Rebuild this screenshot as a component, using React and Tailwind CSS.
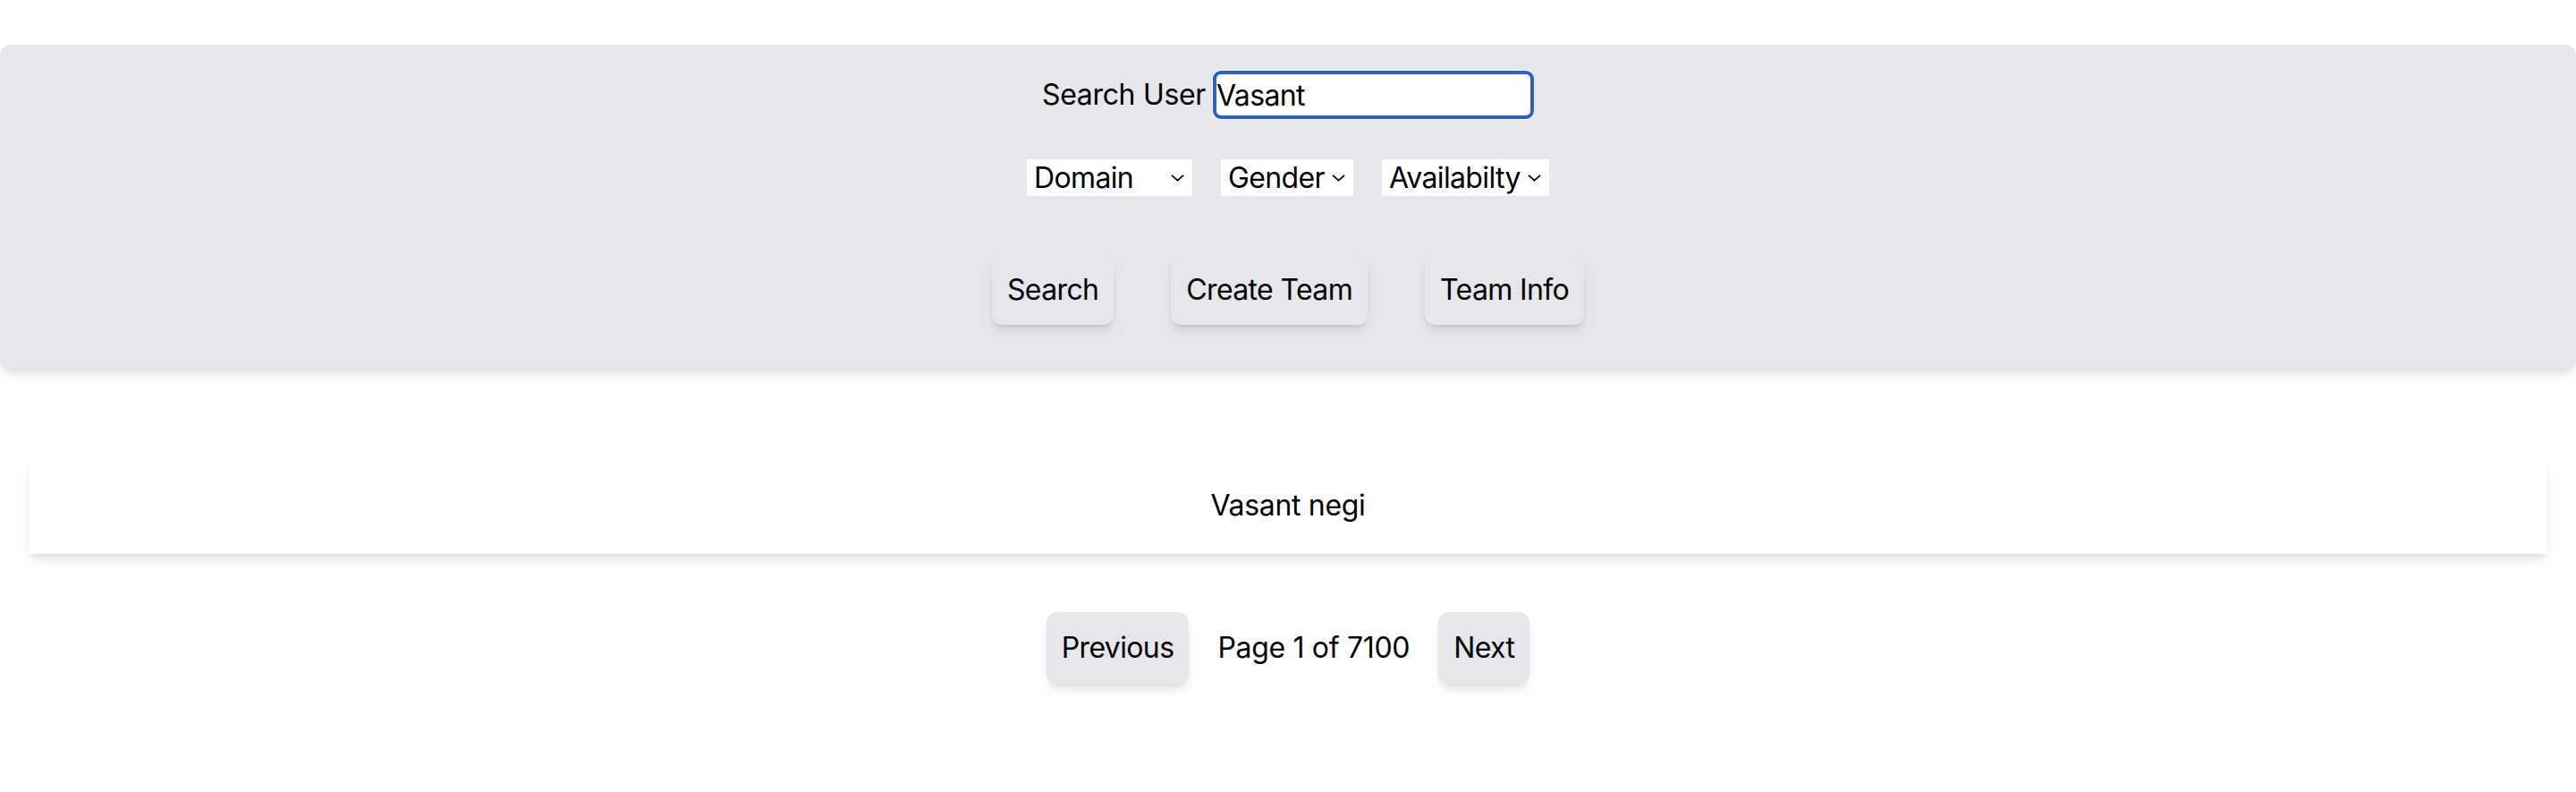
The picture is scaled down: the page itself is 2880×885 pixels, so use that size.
import React, { useState } from "react";

const font = { fontFamily: "Inter, 'Liberation Sans', sans-serif" };

const shadow =
  "shadow-[0_8px_12px_-2px_rgba(0,0,0,0.1),0_4px_8px_-4px_rgba(0,0,0,0.1)]";

function Chevron() {
  return (
    <svg
      width="15"
      height="9"
      viewBox="0 0 15 9"
      fill="none"
      stroke="#000"
      strokeWidth="1.8"
      strokeLinecap="round"
      strokeLinejoin="round"
      className="pointer-events-none absolute right-[9px] top-1/2 -translate-y-1/2"
    >
      <path d="M1.5 1.8 L7.5 7.2 L13.5 1.8" />
    </svg>
  );
}

function Select({ label, width }) {
  return (
    <div className={`relative h-[41px] bg-white ${width}`}>
      <select
        className="h-full w-full appearance-none bg-white pl-[8px] text-[32px] leading-[41px] tracking-[-0.02em] text-black outline-none"
        defaultValue=""
      >
        <option value="">{label}</option>
      </select>
      <Chevron />
    </div>
  );
}

function Btn({ children, h = "h-[78px]" }) {
  return (
    <button
      className={`${h} rounded-xl bg-[#e5e7eb] px-[17px] text-[32px] tracking-[-0.02em] text-black ${shadow}`}
    >
      {children}
    </button>
  );
}

export default function App() {
  const [query, setQuery] = useState("Vasant");

  return (
    <div className="min-h-screen w-full bg-white pt-[50px] tracking-[-0.02em]" style={font}>
      {/* Filter panel */}
      <section
        className={`flex w-full flex-col items-center rounded-xl bg-[#e5e7eb] pt-[29px] pb-[49px] ${shadow}`}
      >
        <div className="flex items-center">
          <label className="mr-[8px] text-[32px] leading-[48px] text-black">
            Search User
          </label>
          <input
            value={query}
            onChange={(e) => setQuery(e.target.value)}
            className="h-[54px] w-[359px] rounded-[9px] border-[4px] border-[#2c60c8] bg-white px-0 text-[32px] tracking-[-0.02em] text-black outline-none ring-1 ring-white"
          />
        </div>

        <div className="mt-[45px] flex items-center gap-[32px]">
          <Select label="Domain" width="w-[185px]" />
          <Select label="Gender" width="w-[148px]" />
          <Select label="Availabilty" width="w-[187px]" />
        </div>

        <div className="mt-[66px] flex items-center gap-[64px]">
          <Btn>Search</Btn>
          <Btn>Create Team</Btn>
          <Btn>Team Info</Btn>
        </div>
      </section>

      {/* Results */}
      <div className="mx-[32px] mt-[98px]">
        <div
          className={`flex h-[109px] items-center justify-center bg-white text-[32px] text-black ${shadow}`}
        >
          Vasant negi
        </div>
      </div>

      {/* Pagination */}
      <div className="mt-[65px] flex items-center justify-center gap-[32px]">
        <Btn h="h-[80px]">Previous</Btn>
        <span className="text-[32px] text-black">Page 1 of 7100</span>
        <Btn h="h-[80px]">Next</Btn>
      </div>
    </div>
  );
}
